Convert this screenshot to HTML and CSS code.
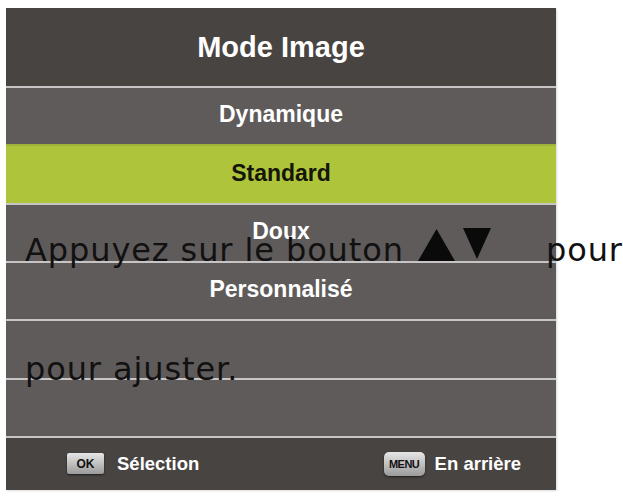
FILE: index.html
```html
<!DOCTYPE html>
<html lang="fr">
<head>
<meta charset="utf-8">
<title>Mode Image</title>
<link rel="stylesheet" href="styles.css">
</head>
<body>
<div class="page">
  <div class="panel">
    <div class="header">Mode Image</div>
    <div class="row">Dynamique</div>
    <div class="row row-active">Standard</div>
    <div class="row">Doux</div>
    <div class="row">Personnalisé</div>
    <div class="row"></div>
    <div class="row"></div>
    <div class="footer">
      <div class="hint"><span class="key key-ok">OK</span><span class="hint-label">Sélection</span></div>
      <div class="hint"><span class="key key-menu">MENU</span><span class="hint-label">En arrière</span></div>
    </div>
  </div>
  <p class="overlay"><span class="line1">Appuyez sur le bouton <svg class="arrows" width="74" height="34" viewBox="0 0 74 34"><polygon points="0,33 18.5,1 37,33" fill="#0a0a0a"/><polygon points="45,0 73,0 59,31" fill="#0a0a0a"/></svg><span class="pour">pour</span></span><br>pour ajuster.</p>
</div>
</body>
</html>
```

FILE: styles.css
```css
html, body {
  margin: 0;
  padding: 0;
  background: #ffffff;
}

.page {
  position: relative;
  width: 623px;
  height: 496px;
  overflow: hidden;
}

.panel {
  margin: 8px 0 0 6px;
  width: 550px;
  display: flex;
  flex-direction: column;
  font-family: "Liberation Sans", Arial, sans-serif;
  font-weight: bold;
  color: #ffffff;
  box-shadow: 1px 1px 2px rgba(0, 0, 0, 0.15);
}

.header {
  height: 78px;
  background: #484442;
  display: flex;
  align-items: center;
  justify-content: center;
  font-size: 29px;
}

.row {
  box-sizing: border-box;
  height: 58.33px;
  border-top: 2px solid #c6c4c4;
  padding-bottom: 3px;
  background: #5f5b5b;
  display: flex;
  align-items: center;
  justify-content: center;
  font-size: 23px;
}

.row-active {
  background: #adc43b;
  color: #15150a;
  border-top-color: #9fb23a;
  padding-bottom: 1px;
}

.footer {
  box-sizing: border-box;
  height: 54px;
  border-top: 2px solid #c6c4c4;
  background: #484442;
  display: flex;
  align-items: center;
  justify-content: space-between;
  padding: 0 35px 0 61px;
  font-size: 18.5px;
}

.hint {
  display: flex;
  align-items: center;
}

.key {
  display: inline-flex;
  align-items: center;
  justify-content: center;
  color: #111111;
  font-weight: bold;
  background: linear-gradient(#e6e6e6, #b9b9b9 60%, #9a9a9a);
  box-shadow: 0 1px 2px rgba(0, 0, 0, 0.6);
}

.key-ok {
  width: 37px;
  height: 21px;
  font-size: 12px;
  border-radius: 2px;
  margin-right: 13px;
}

.key-menu {
  width: 41px;
  height: 24px;
  font-size: 11px;
  border-radius: 5px;
  margin-right: 10px;
  letter-spacing: -0.5px;
}

.overlay {
  position: absolute;
  left: 25px;
  top: 191px;
  margin: 0;
  font-family: "DejaVu Sans", "Noto Sans", sans-serif;
  font-weight: normal;
  font-size: 32px;
  letter-spacing: 0.9px;
  line-height: 119px;
  color: #111111;
  white-space: nowrap;
}

.arrows {
  vertical-align: -1px;
  margin-left: 3px;
}

.pour {
  margin-left: 54px;
}
```
